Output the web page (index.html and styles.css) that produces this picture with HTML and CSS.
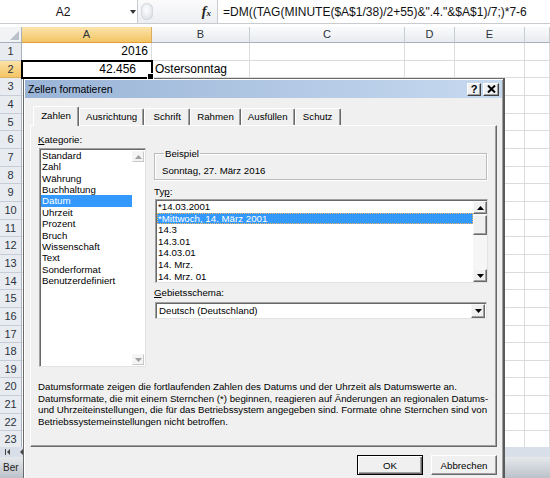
FILE: index.html
```html
<!DOCTYPE html>
<html lang="de">
<head>
<meta charset="utf-8">
<title>Zellen formatieren</title>
<link rel="stylesheet" href="styles.css">
</head>
<body>
<div class="app">
  <div class="formula-bar">
    <div class="name-box"><span class="name">A2</span><span class="nb-arrow"></span></div>
    <div class="fb-mid"><span class="dimple"></span><span class="fx">f<span class="fx-x">x</span></span></div>
    <div class="formula">=DM((TAG(MINUTE($A$1/38)/2+55)&amp;".4."&amp;$A$1)/7;)*7-6</div>
  </div>

  <div class="sheet">
    <div class="row head">
      <div class="rh corner"><svg width="10" height="10" viewBox="0 0 10 10"><polygon points="10,1 10,10 1,10" fill="#b9c0c9"/></svg></div>
      <div class="ch ca sel">A</div><div class="ch cb">B</div><div class="ch cc">C</div><div class="ch cd">D</div><div class="ch ce">E</div><div class="ch cf"></div>
    </div>
    <div class="row"><div class="rh">1</div><div class="c ca num">2016</div><div class="c cb"></div><div class="c cc"></div><div class="c cd"></div><div class="c ce"></div><div class="c cf"></div></div>
    <div class="row"><div class="rh sel">2</div><div class="c ca num cur">42.456</div><div class="c cb txt">Ostersonntag</div><div class="c cc"></div><div class="c cd"></div><div class="c ce"></div><div class="c cf"></div></div>
    <div class="row"><div class="rh">3</div><div class="c ca"></div><div class="c cb"></div><div class="c cc"></div><div class="c cd"></div><div class="c ce"></div><div class="c cf"></div></div>
    <div class="row"><div class="rh">4</div><div class="c ca"></div><div class="c cb"></div><div class="c cc"></div><div class="c cd"></div><div class="c ce"></div><div class="c cf"></div></div>
    <div class="row"><div class="rh">5</div><div class="c ca"></div><div class="c cb"></div><div class="c cc"></div><div class="c cd"></div><div class="c ce"></div><div class="c cf"></div></div>
    <div class="row"><div class="rh">6</div><div class="c ca"></div><div class="c cb"></div><div class="c cc"></div><div class="c cd"></div><div class="c ce"></div><div class="c cf"></div></div>
    <div class="row"><div class="rh">7</div><div class="c ca"></div><div class="c cb"></div><div class="c cc"></div><div class="c cd"></div><div class="c ce"></div><div class="c cf"></div></div>
    <div class="row"><div class="rh">8</div><div class="c ca"></div><div class="c cb"></div><div class="c cc"></div><div class="c cd"></div><div class="c ce"></div><div class="c cf"></div></div>
    <div class="row"><div class="rh">9</div><div class="c ca"></div><div class="c cb"></div><div class="c cc"></div><div class="c cd"></div><div class="c ce"></div><div class="c cf"></div></div>
    <div class="row"><div class="rh">10</div><div class="c ca"></div><div class="c cb"></div><div class="c cc"></div><div class="c cd"></div><div class="c ce"></div><div class="c cf"></div></div>
    <div class="row"><div class="rh">11</div><div class="c ca"></div><div class="c cb"></div><div class="c cc"></div><div class="c cd"></div><div class="c ce"></div><div class="c cf"></div></div>
    <div class="row"><div class="rh">12</div><div class="c ca"></div><div class="c cb"></div><div class="c cc"></div><div class="c cd"></div><div class="c ce"></div><div class="c cf"></div></div>
    <div class="row"><div class="rh">13</div><div class="c ca"></div><div class="c cb"></div><div class="c cc"></div><div class="c cd"></div><div class="c ce"></div><div class="c cf"></div></div>
    <div class="row"><div class="rh">14</div><div class="c ca"></div><div class="c cb"></div><div class="c cc"></div><div class="c cd"></div><div class="c ce"></div><div class="c cf"></div></div>
    <div class="row"><div class="rh">15</div><div class="c ca"></div><div class="c cb"></div><div class="c cc"></div><div class="c cd"></div><div class="c ce"></div><div class="c cf"></div></div>
    <div class="row"><div class="rh">16</div><div class="c ca"></div><div class="c cb"></div><div class="c cc"></div><div class="c cd"></div><div class="c ce"></div><div class="c cf"></div></div>
    <div class="row"><div class="rh">17</div><div class="c ca"></div><div class="c cb"></div><div class="c cc"></div><div class="c cd"></div><div class="c ce"></div><div class="c cf"></div></div>
    <div class="row"><div class="rh">18</div><div class="c ca"></div><div class="c cb"></div><div class="c cc"></div><div class="c cd"></div><div class="c ce"></div><div class="c cf"></div></div>
    <div class="row"><div class="rh">19</div><div class="c ca"></div><div class="c cb"></div><div class="c cc"></div><div class="c cd"></div><div class="c ce"></div><div class="c cf"></div></div>
    <div class="row"><div class="rh">20</div><div class="c ca"></div><div class="c cb"></div><div class="c cc"></div><div class="c cd"></div><div class="c ce"></div><div class="c cf"></div></div>
    <div class="row"><div class="rh">21</div><div class="c ca"></div><div class="c cb"></div><div class="c cc"></div><div class="c cd"></div><div class="c ce"></div><div class="c cf"></div></div>
    <div class="row"><div class="rh">22</div><div class="c ca"></div><div class="c cb"></div><div class="c cc"></div><div class="c cd"></div><div class="c ce"></div><div class="c cf"></div></div>
    <div class="row"><div class="rh">23</div><div class="c ca"></div><div class="c cb"></div><div class="c cc"></div><div class="c cd"></div><div class="c ce"></div><div class="c cf"></div></div>
  </div>

  <div class="sheet-foot">
    <div class="nav">
      <svg width="6" height="6" viewBox="0 0 6 6"><rect x="0" y="0" width="1" height="6" fill="#444"/><polygon points="5,0 5,6 2,3" fill="#444"/></svg>
      <svg width="4" height="6" viewBox="0 0 4 6"><polygon points="4,0 4,6 1,3" fill="#444"/></svg>
    </div>
    <div class="tabbar"><span class="sheet-tab">Ber</span></div>
  </div>

  <div class="dialog">
    <div class="titlebar">
      <span class="title">Zellen formatieren</span>
      <span class="tb-btns">
        <span class="tb-btn help">?</span>
        <span class="tb-btn close"><svg width="9" height="8" viewBox="0 0 9 8"><path d="M1 0.5 L8 7.5 M8 0.5 L1 7.5" stroke="#000" stroke-width="2"/></svg></span>
      </span>
    </div>
    <div class="dlg-body">
      <div class="tabs">
        <span class="tab current">Zahlen</span>
        <span class="tab">Ausrichtung</span>
        <span class="tab">Schrift</span>
        <span class="tab">Rahmen</span>
        <span class="tab">Ausfüllen</span>
        <span class="tab">Schutz</span>
      </div>
      <div class="panel">
        <div class="panel-main">
          <div class="col-left">
            <div class="lbl"><u>K</u>ategorie:</div>
            <div class="listbox cat">
              <ul class="items">
                <li>Standard</li>
                <li>Zahl</li>
                <li>Währung</li>
                <li>Buchhaltung</li>
                <li class="sel">Datum</li>
                <li>Uhrzeit</li>
                <li>Prozent</li>
                <li>Bruch</li>
                <li>Wissenschaft</li>
                <li>Text</li>
                <li>Sonderformat</li>
                <li>Benutzerdefiniert</li>
              </ul>
              <div class="vscroll off">
                <span class="sb-btn"><svg width="7" height="4" viewBox="0 0 7 4"><polygon points="3.5,0 7,4 0,4" fill="#a0a0a0"/></svg></span>
                <span class="sb-track"></span>
                <span class="sb-btn"><svg width="7" height="4" viewBox="0 0 7 4"><polygon points="0,0 7,0 3.5,4" fill="#a0a0a0"/></svg></span>
              </div>
            </div>
          </div>
          <div class="col-right">
            <fieldset class="group">
              <legend>Beispiel</legend>
              <div class="sample">Sonntag, 27. März 2016</div>
            </fieldset>
            <div class="lbl typ">Ty<u>p</u>:</div>
            <div class="listbox types">
              <ul class="items">
                <li>*14.03.2001</li>
                <li class="sel focus">*Mittwoch, 14. März 2001</li>
                <li>14.3</li>
                <li>14.3.01</li>
                <li>14.03.01</li>
                <li>14. Mrz.</li>
                <li>14. Mrz. 01</li>
              </ul>
              <div class="vscroll">
                <span class="sb-btn"><svg width="7" height="4" viewBox="0 0 7 4"><polygon points="3.5,0 7,4 0,4" fill="#000"/></svg></span>
                <span class="sb-thumb"></span>
                <span class="sb-track"></span>
                <span class="sb-btn"><svg width="7" height="4" viewBox="0 0 7 4"><polygon points="0,0 7,0 3.5,4" fill="#000"/></svg></span>
              </div>
            </div>
            <div class="lbl geb"><u>G</u>ebietsschema:</div>
            <div class="combo">
              <span class="combo-val">Deutsch (Deutschland)</span>
              <span class="sb-btn combo-btn"><svg width="7" height="4" viewBox="0 0 7 4"><polygon points="0,0 7,0 3.5,4" fill="#000"/></svg></span>
            </div>
          </div>
        </div>
        <p class="desc">Datumsformate zeigen die fortlaufenden Zahlen des Datums und der Uhrzeit als Datumswerte an.<br>Datumsformate, die mit einem Sternchen (*) beginnen, reagieren auf Änderungen an regionalen Datums-<br>und Uhrzeiteinstellungen, die für das Betriebssystem angegeben sind. Formate ohne Sternchen sind von<br>Betriebssystemeinstellungen nicht betroffen.</p>
      </div>
      <div class="buttons">
        <button class="btn default">OK</button>
        <button class="btn">Abbrechen</button>
      </div>
    </div>
  </div>
</div>
</body>
</html>
```

FILE: styles.css
```css
* { box-sizing: border-box; }
html, body { margin: 0; padding: 0; }
body {
  width: 550px;
  height: 478px;
  overflow: hidden;
  background: #fff;
  font-family: "Liberation Sans", Arial, sans-serif;
  color: #000;
}
.app { position: relative; width: 550px; height: 478px; overflow: hidden; }

/* formula bar */
.formula-bar {
  display: flex;
  height: 24px;
  border-bottom: 1px solid #c8ccd1;
  background: linear-gradient(#fbfbfc, #eceef1);
  margin-bottom: 3px;
}
.name-box {
  width: 138px;
  display: flex;
  align-items: center;
  background: #fff;
  border-right: 1px solid #c8ccd1;
}
.name { width: 126px; text-align: center; font-size: 12px; color: #111; }
.nb-arrow {
  width: 0; height: 0;
  border-left: 3.5px solid transparent;
  border-right: 3.5px solid transparent;
  border-top: 4px solid #333;
  margin-left: 4px;
}
.fb-mid { width: 79px; display: flex; align-items: center; }
.dimple {
  width: 12px; height: 17px;
  margin-left: 3px;
  border-radius: 6px;
  background: radial-gradient(ellipse at 45% 40%, #ffffff 0%, #e3e6ea 60%, #c6cbd1 100%);
  box-shadow: inset 0 0 0 1px #d6dadf;
}
.fx {
  margin-left: auto;
  margin-right: 6px;
  font-family: "Liberation Serif", serif;
  font-style: italic;
  font-weight: bold;
  font-size: 14px;
  color: #222;
}
.fx-x { font-size: 9px; }
.formula {
  flex: 1;
  background: #fff;
  border-left: 1px solid #c8ccd1;
  padding-left: 5px;
  font-size: 12px;
  line-height: 24px;
  white-space: nowrap;
  overflow: hidden;
  color: #111;
}

/* sheet */
.sheet { height: 420px; overflow: hidden; }
.row { display: flex; height: 17.67px; }
.row.head { height: 16px; }
.rh {
  width: 22px; flex: none;
  background: #e8ecf1;
  border-right: 1px solid #a7b0bc;
  border-bottom: 1px solid #c6cdd6;
  font-size: 11px;
  line-height: 17px;
  text-align: center;
  color: #2b333d;
}
.rh.sel { background: linear-gradient(#fbe2a7, #f5c565); border-bottom-color: #e0b060; }
.rh.corner { display: flex; align-items: flex-end; justify-content: flex-end; padding: 0 2px 2px 0; background: #f2f3f5; border-bottom-color: #a7b0bc; }
.ch {
  background: linear-gradient(#fafbfc, #e8ebef);
  border-right: 1px solid #c8cdd4;
  border-bottom: 1px solid #a7b0bc;
  font-size: 11px;
  line-height: 15px;
  text-align: center;
  color: #2b333d;
}
.ch.sel { background: linear-gradient(#fbe4ad, #f4c563); border-right-color: #dcae5c; border-bottom-color: #e09c3a; }
.c { border-right: 1px solid #dadcdd; border-bottom: 1px solid #dadcdd; font-size: 12px; line-height: 17px; white-space: nowrap; }
.ca { width: 130px; flex: none; }
.cb { width: 98px; flex: none; }
.cc { width: 155px; flex: none; }
.cd { width: 50px; flex: none; }
.ce { width: 70px; flex: none; }
.cf { flex: 1; }
.num { text-align: right; padding-right: 3px; }
.cur { padding-right: 15px; outline: 2px solid #000; outline-offset: -1px; position: relative; z-index: 1; }
.cur::after {
  content: "";
  position: absolute;
  right: -3px; bottom: -3px;
  width: 5px; height: 5px;
  background: #000;
  border: 1px solid #fff;
}
.txt { padding-left: 3px; overflow: visible; }

/* sheet footer */
.sheet-foot { height: 31px; }
.nav {
  height: 10px;
  background: #d8dfe8;
  display: flex;
  align-items: center;
  gap: 8px;
  padding-left: 5px;
}
.tabbar { height: 21px; background: linear-gradient(#e6e8eb, #bcc2ca); overflow: hidden; white-space: nowrap; }
.sheet-tab { display: inline-block; padding-left: 3px; font-size: 10px; line-height: 21px; color: #222; }

/* dialog */
.dialog {
  position: absolute;
  left: 23px;
  top: 78px;
  width: 482px;
  height: 410px;
  padding: 1px;
  background: #f0f0f0;
  border: 1px solid #6a6a6a;
  border-right: 2px solid #5a5a5a;
  box-shadow: inset 1px 1px 0 #fff, inset -1px -1px 0 #a0a0a0;
  font-size: 9.7px;
  line-height: 11px;
}
.titlebar {
  height: 18px;
  display: flex;
  align-items: center;
  padding: 0 3px 0 3px;
  background: linear-gradient(to right, #9ab4d7, #c6d9ef);
}
.title { font-size: 10.5px; color: #000; }
.tb-btns { margin-left: auto; display: flex; gap: 2px; }
.tb-btn {
  width: 14px; height: 13px;
  display: flex; align-items: center; justify-content: center;
  background: #eef0f2;
  border: 1px solid;
  border-color: #fff #404040 #404040 #fff;
  box-shadow: inset -1px -1px 0 #a0a0a0;
  font-size: 11px;
  font-weight: bold;
}
.tb-btn.close { width: 16px; }
.dlg-body { padding: 9px 5px 0 5px; }

.tabs { display: flex; align-items: flex-end; height: 18px; margin-left: 3px; position: relative; z-index: 1; }
.tab {
  height: 17px;
  min-width: 46px;
  padding: 0 6px;
  text-align: center;
  line-height: 16px;
  border: 1px solid;
  border-color: #fff #696969 transparent #fff;
  border-bottom: 0;
  border-radius: 2px 2px 0 0;
  box-shadow: inset -1px 0 0 #a0a0a0;
  white-space: nowrap;
}
.tab.current { height: 20px; line-height: 18px; margin-bottom: -1px; background: #f0f0f0; padding: 0 7px; }

.panel {
  height: 322px;
  padding: 8px 8px 0 7px;
  border: 1px solid;
  border-color: #fff #696969 #696969 #fff;
  box-shadow: inset -1px -1px 0 #a0a0a0;
}
.panel-main { display: flex; height: 233px; }
.col-left { width: 108px; flex: none; display: flex; flex-direction: column; }
.col-right { width: 334px; flex: none; margin-left: 8px; display: flex; flex-direction: column; }
.lbl { height: 11px; white-space: nowrap; }

.listbox {
  display: flex;
  background: #fff;
  border: 1px solid;
  border-color: #a0a0a0 #e3e3e3 #e3e3e3 #a0a0a0;
  box-shadow: inset 1px 1px 0 #696969;
  padding: 1px 0 0 1px;
}
.listbox.cat { margin: 3px 0 0 1px; width: 107px; height: 219px; }
.listbox.types { margin: 2px 0 0 1px; width: 333px; height: 84px; }
.items { list-style: none; margin: 0; padding: 0; flex: 1; overflow: hidden; }
.cat .items li { height: 11.36px; line-height: 11.36px; padding-left: 1px; white-space: nowrap; }
.types .items li { height: 11.6px; line-height: 11.6px; padding-left: 1px; white-space: nowrap; }
.items li.sel { background: #3399ff; color: #fff; }
.items li.focus { outline: 1px dotted #f0b860; outline-offset: -1px; }

.vscroll { width: 14px; flex: none; display: flex; flex-direction: column; background: #f6f6f6; }
.vscroll.off { width: 13px; background: #fff; padding: 1px 1px 1px 0; }
.sb-btn {
  height: 13px;
  flex: none;
  display: flex; align-items: center; justify-content: center;
  background: #f0f0f0;
  border: 1px solid;
  border-color: #f8f8f8 #696969 #696969 #f8f8f8;
  box-shadow: inset -1px -1px 0 #a0a0a0;
}
.vscroll.off .sb-btn { height: 11px; border-color: #f7f7f7 #c8c8c8 #c8c8c8 #f7f7f7; box-shadow: none; background: #f4f4f4; }
.sb-thumb {
  height: 20px;
  margin-top: 1px;
  flex: none;
  background: #f0f0f0;
  border: 1px solid;
  border-color: #f8f8f8 #696969 #696969 #f8f8f8;
  box-shadow: inset -1px -1px 0 #a0a0a0;
}
.sb-track { flex: 1; }

.group {
  margin: 14px 1px 0 0;
  padding: 0 7px 3px;
  min-inline-size: 0;
  border: 1px solid #bcbcbc;
  box-shadow: inset 1px 1px 0 #fff, 1px 1px 0 #fff;
}
.group legend { padding: 0 1px; margin-left: 2px; line-height: 11px; }
.sample { padding-top: 6px; height: 17px; line-height: 11px; }
.lbl.typ { margin-top: 6px; }
.lbl.geb { margin-top: 4px; }
.combo {
  margin: 4px 0 0 1px;
  width: 332px;
  height: 17px;
  display: flex;
  align-items: center;
  background: #fff;
  border: 1px solid;
  border-color: #a0a0a0 #e3e3e3 #e3e3e3 #a0a0a0;
  box-shadow: inset 1px 1px 0 #696969;
  padding: 1px 1px 1px 3px;
}
.combo-val { flex: 1; }
.combo-btn { width: 14px; height: 14px; }

.desc { margin: 14px 0 0 0; line-height: 11.7px; white-space: nowrap; }

.buttons { display: flex; justify-content: flex-end; gap: 8px; margin-top: 8px; }
.btn {
  width: 66px;
  height: 20px;
  padding: 0;
  font: inherit;
  color: #000;
  background: #f0f0f0;
  border: 1px solid;
  border-color: #fff #696969 #696969 #fff;
  box-shadow: inset -1px -1px 0 #a0a0a0;
}
.btn.default { border: 1px solid #000; box-shadow: inset 1px 1px 0 #fff, inset -1px -1px 0 #696969, inset -2px -2px 0 #a0a0a0; }
```
